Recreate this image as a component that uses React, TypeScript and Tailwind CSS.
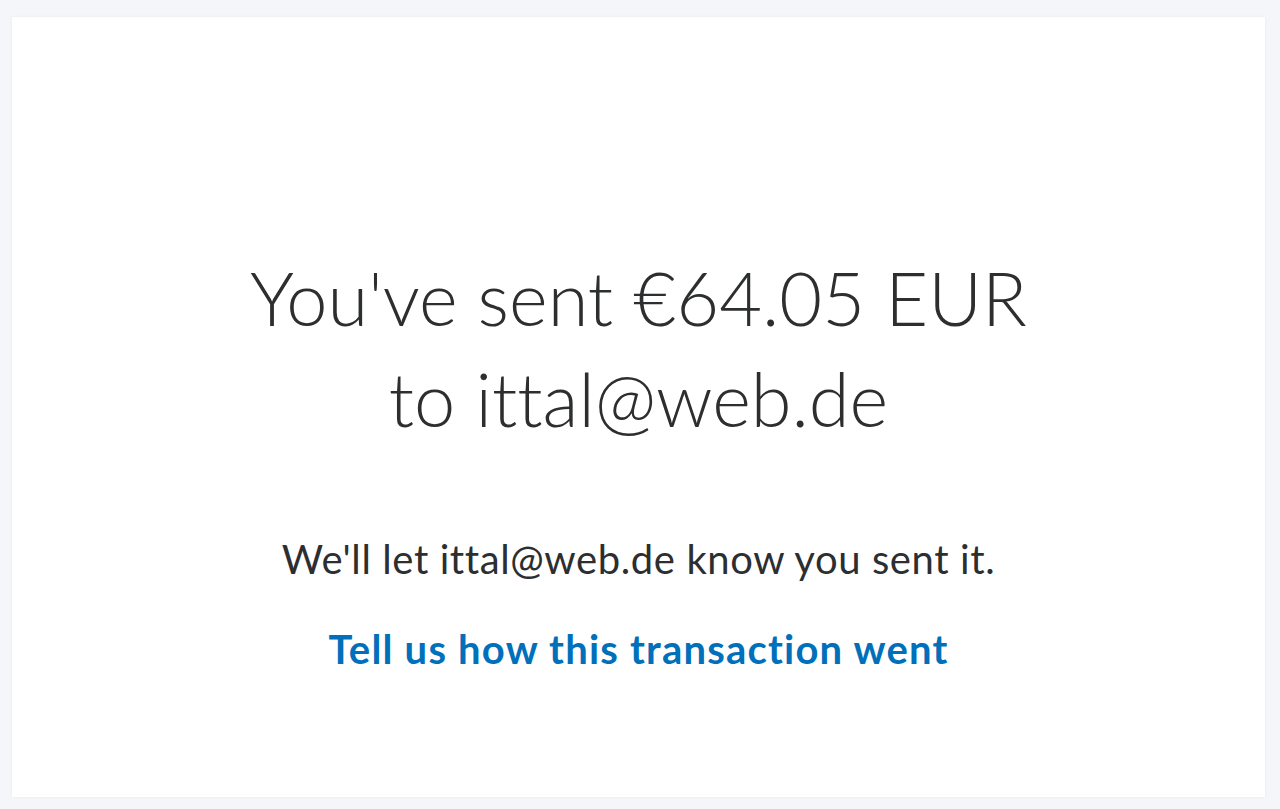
export default function App() {
    return (
        <div
            className="min-h-screen w-full bg-[#f5f6fa] px-[12px] pt-[17px] pb-[12px] [font-variant-ligatures:none]"
            style={{ fontFamily: 'Lato, "Open Sans", sans-serif' }}
        >
            <div className="flex h-[780px] w-[1253px] flex-col items-center bg-white pt-[230px] shadow-[0_0_3px_rgba(0,0,0,0.06)]">
                <h1 className="text-center text-[74px] leading-[101px] font-light text-[#2c2e2f]">
                    You've sent €64.05 EUR
                    <br />
                    to ittal@web.de
                </h1>
                <p className="mt-[86px] text-[40px] leading-[48px] tracking-[0.6px] text-[#2c2e2f]">
                    We'll let ittal@web.de know you sent it.
                </p>
                <a href="#" className="mt-[42px] text-[40px] leading-[48px] font-bold tracking-[1.2px] text-[#0070ba]">
                    Tell us how this transaction went
                </a>
            </div>
        </div>
    );
}
